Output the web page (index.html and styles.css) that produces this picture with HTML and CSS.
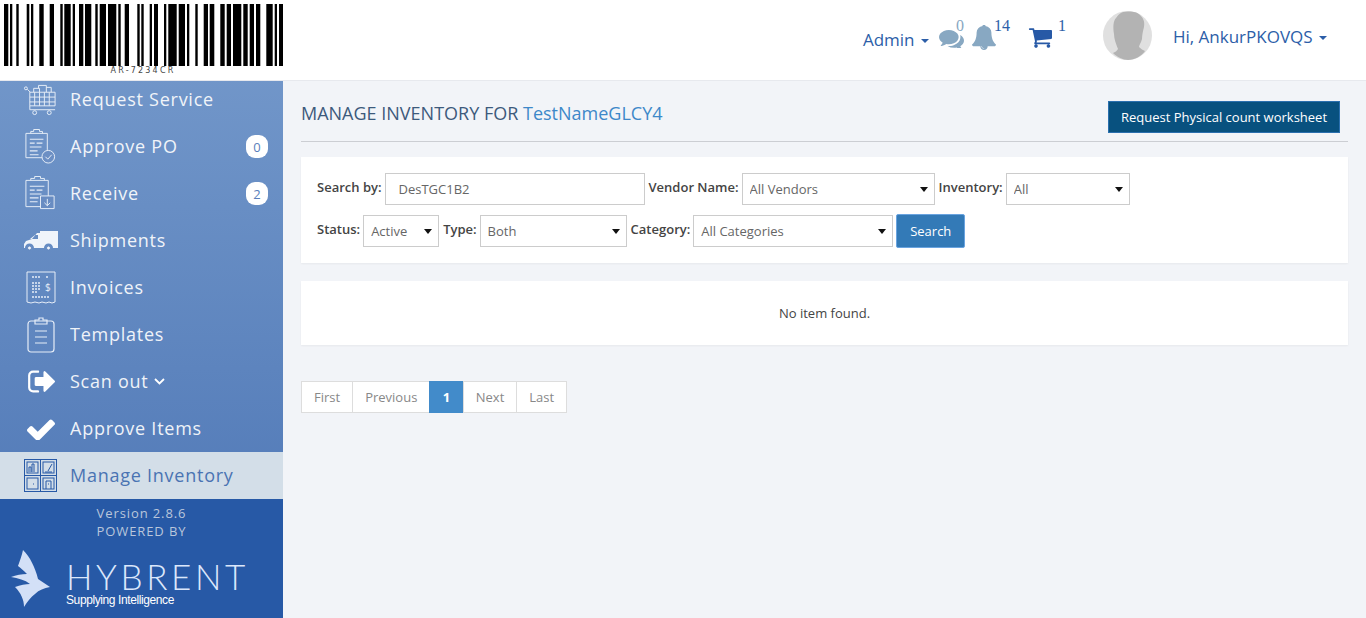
FILE: index.html
```html
<!DOCTYPE html>
<html lang="en">
<head>
    <meta charset="UTF-8">
    <meta name="viewport" content="width=device-width, initial-scale=1.0">
    <title>Manage Inventory</title>
    <link rel="stylesheet" href="styles.css">
</head>
<body>
    <header class="topbar">
        <div class="barcode">
            <svg class="barcode-bars" width="283" height="62" viewBox="0 0 283 62" fill="#000">
                <path d="M4 0h4.300v62H4zM10 0h2.300v62H10zM16.300 0h2.400v62h-2.400zM26.700 0h2.600v62h-2.600zM31 0h2.300v62H31zM39.300 0h4.400v62h-4.400zM49.700 0H54v62h-4.300zM60.300 0h2.400v62h-2.400zM64.300 0h6.400v62h-6.400zM72.700 0H75v62h-2.300zM79 0h4.300v62H79zM85 0h6.300v62H85zM95.300 0h2.400v62h-2.400zM99.700 0H106v62h-6.300zM108 0h8.300v62H108zM118.300 0h2.400v62h-2.400zM124.700 0h4.300v62h-4.300zM137.300 0h2.400v62h-2.400zM141.300 0h2.400v62h-2.400zM149.700 0h2.300v62h-2.300zM154 0h4v62h-4zM164 0h2.300v62H164zM168.300 0h8.400v62h-8.400zM178.700 0h6.300v62h-6.300zM187 0h2.300v62H187zM195.300 0h2.400v62h-2.400zM203.700 0h4.300v62h-4.300zM209.700 0h4.600v62h-4.600zM220.300 0h4.400v62h-4.400zM226.700 0h4.300v62h-4.300zM233 0h8.300v62H233zM243.300 0h4.400v62h-4.400zM249.700 0h4.300v62h-4.300zM256 0h4.300v62H256zM266.300 0h6.400v62h-6.400zM274.700 0h2.300v62h-2.300zM279 0h4.300v62H279z"/>
            </svg>
            <span class="barcode-text">AR-7234CR</span>
        </div>
        <div class="top-links">
            <a class="top-link admin">Admin <i class="caret"></i></a>
            <span class="top-icon chat">
                <svg width="25" height="20" viewBox="0 128 1792 1410" fill="#88a8c2"><path d="M1408 768q0 139-94 257t-256.500 186.500-353.500 68.500q-86 0-176-16-124 88-278 128-36 9-86 16h-3q-11 0-20.500-8t-11.500-21q-1-3-1-6.500t.5-6.500 2-6l2.500-5 3.500-5.500 4-5 4.500-5 4-4.500q5-6 23-25t26-29.500 22.500-29 25-38.500 20.500-44q-124-72-195-177t-71-224q0-139 94-257t256.500-186.500 353.500-68.500 353.500 68.500 256.500 186.500 94 257zm384 256q0 120-71 224.500t-195 176.500q10 24 20.500 44t25 38.500 22.500 29 26 29.500 23 25q1 1 4 4.500t4.500 5 4 5 3.500 5.500l2.500 5 2 6 .5 6.500-1 6.500q-3 14-13 22t-22 7q-50-7-86-16-154-40-278-128-90 16-176 16-271 0-472-132 58 4 88 4 161 0 309-45t264-129q125-92 192-212t67-254q0-77-23-152 129 71 204 178t75 230z"/></svg>
                <sup class="count count-chat">0</sup>
            </span>
            <span class="top-icon bell">
                <svg width="24" height="25" viewBox="64 64 1664 1728" fill="#88a8c2"><path d="M912 1696q0-16-16-16-59 0-101.500-42.500t-42.500-101.500q0-16-16-16t-16 16q0 73 51.500 124.500t124.500 51.500q16 0 16-16zm816-288q0 52-38 90t-90 38h-448q0 106-75 181t-181 75-181-75-75-181h-448q-52 0-90-38t-38-90q50-42 91-88t85-119.500 74.500-158.500 50-206 19.500-260q0-152 117-282.500t307-158.500q-8-19-8-39 0-40 28-68t68-28 68 28 28 68q0 20-8 39 190 28 307 158.500t117 282.500q0 139 19.500 260t50 206 74.500 158.500 85 119.500 91 88z"/></svg>
                <sup class="count count-bell">14</sup>
            </span>
            <span class="top-icon cart">
                <svg width="24" height="20" viewBox="0 256 1728 1408" fill="#2759a6"><path d="M704 1536q0 52-38 90t-90 38-90-38-38-90 38-90 90-38 90 38 38 90zm896 0q0 52-38 90t-90 38-90-38-38-90 38-90 90-38 90 38 38 90zm128-1088v512q0 24-16.500 42.500t-40.500 21.500l-1044 122q13 60 13 70 0 16-24 64h920q26 0 45 19t19 45-19 45-45 19h-1024q-26 0-45-19t-19-45q0-11 8-31.500t16-36 21.500-40 15.500-29.500l-177-823h-204q-26 0-45-19t-19-45 19-45 45-19h256q16 0 28.500 6.500t19.500 15.500 13 24.500 8 26 5.500 29.500 4.500 26h1201q26 0 45 19t19 45z"/></svg>
                <sup class="count count-cart">1</sup>
            </span>
            <span class="avatar">
                <svg width="49" height="49" viewBox="0 0 49 49">
                    <circle cx="24.500" cy="24.500" r="24.500" fill="#e0e0e0"/>
                    <path d="M20 1c5-1 14-1 17 3 3 3 5 6 4 12-1 4-2 8-2 12-1 4-3 6-3 8 2 2 4 3 6 4-3 5-11 9-17 9-5 0-11-3-15-7 2-1 4-2 5-4-2-5-4-10-4-15-1-6-1-13 2-16 2-3 4-5 7-6z" fill="#b3b3b3"/>
                </svg>
            </span>
            <a class="top-link user">Hi, AnkurPKOVQS <i class="caret"></i></a>
        </div>
    </header>

    <div class="page">
        <aside class="sidebar">
            <nav class="menu">
                <a class="menu-item">
                    <span class="menu-icon">
                        <svg width="36" height="36" viewBox="0 0 36 36" fill="none" stroke="#e6edf7" stroke-width="1">
                            <circle cx="3" cy="6" r="1.500"/><path d="M4.500 7l3 3"/>
                            <path d="M7 10h26v14H7zM7 15h26M7 20h26M12 10v14M17 10v14M22 10v14M27 10v14M7 24v4h26"/>
                            <path d="M11 10V6h6v4M16 6V3h8v7M24 5h5v5"/>
                            <circle cx="12" cy="31" r="2"/><circle cx="27" cy="31" r="2"/>
                        </svg>
                    </span>
                    <span class="menu-label">Request Service</span>
                </a>
                <a class="menu-item">
                    <span class="menu-icon">
                        <svg width="36" height="36" viewBox="0 0 36 36" fill="none" stroke="#e6edf7" stroke-width="1">
                            <path d="M24 29H3V4h22v17M8 4V2h3V0h6v2h3v2"/>
                            <path d="M7 10h14M7 14h5M14 14h6M7 18h12M7 22h8M7 26h9" stroke-width="1.200"/>
                            <circle cx="26" cy="28" r="6.500" fill="#6c8fc4"/><path d="M23 28l2.500 2.500 4-4.500"/>
                        </svg>
                    </span>
                    <span class="menu-label">Approve PO</span>
                    <span class="badge">0</span>
                </a>
                <a class="menu-item">
                    <span class="menu-icon">
                        <svg width="36" height="36" viewBox="0 0 36 36" fill="none" stroke="#e6edf7" stroke-width="1">
                            <path d="M23 31H3V4h23v16M8 4V2h4V0h6v2h4v2"/>
                            <path d="M7 10h15M7 14h5M14 14h6M7 18h12M7 22h9M7 26h8" stroke-width="1.200"/>
                            <path d="M18 20h14v13H18zM25 23v7M22 27l3 3 3-3" fill="#688cc2"/>
                        </svg>
                    </span>
                    <span class="menu-label">Receive</span>
                    <span class="badge">2</span>
                </a>
                <a class="menu-item">
                    <span class="menu-icon">
                        <svg width="34" height="20" viewBox="0 0 34 20" fill="#f0f4fa">
                            <path d="M16 0h18v17h-5a4.500 4.500 0 0 0-9 0H10a4.500 4.500 0 0 0-9 0H0v-4l2-3 6-2 5-6h3zM6 8h8V4h-3z" fill-rule="evenodd"/>
                            <circle cx="5.500" cy="17" r="2" stroke="#6488c0"/><circle cx="24.500" cy="17" r="2" stroke="#6488c0"/>
                        </svg>
                    </span>
                    <span class="menu-label">Shipments</span>
                </a>
                <a class="menu-item">
                    <span class="menu-icon">
                        <svg width="30" height="34" viewBox="0 0 30 34" fill="none" stroke="#e6edf7" stroke-width="1">
                            <path d="M1 1h28v30l-3 1-3-1-3 1-4-1-3 1-4-1-4 1-4-1z"/>
                            <path d="M6 6h9M20 6h3M6 12h8M6 15h8M6 18h8M6 21h6M6 26h18" stroke-dasharray="2 1" stroke-width="1.400"/>
                            <text x="19" y="20" class="invoice-sign">$</text>
                        </svg>
                    </span>
                    <span class="menu-label">Invoices</span>
                </a>
                <a class="menu-item">
                    <span class="menu-icon">
                        <svg width="28" height="36" viewBox="0 0 28 36" fill="none" stroke="#e6edf7" stroke-width="1.200">
                            <rect x="1" y="4" width="26" height="31" rx="3"/>
                            <path d="M8 7V3h4V1h4v2h4v4z"/>
                            <path d="M8 14h12M8 20h12M8 26h12"/>
                        </svg>
                    </span>
                    <span class="menu-label">Templates</span>
                </a>
                <a class="menu-item">
                    <span class="menu-icon">
                        <svg width="28" height="23" viewBox="0 256 1632 1280" fill="#fff"><path d="M704 1440q0 4 1 20t.5 26.500-3 23.500-10 19.500-20.500 6.500h-320q-119 0-203.500-84.500t-84.500-203.500v-704q0-119 84.500-203.500t203.500-84.500h320q13 0 22.500 9.500t9.500 22.500q0 4 1 20t.5 26.500-3 23.500-10 19.500-20.500 6.500h-320q-66 0-113 47t-47 113v704q0 66 47 113t113 47h288l11.500 1 11.500 3 8 5.500 7 9 2 13.500zm928-544q0 26-19 45l-544 544q-19 19-45 19t-45-19-19-45v-288h-448q-26 0-45-19t-19-45v-384q0-26 19-45t45-19h448v-288q0-26 19-45t45-19 45 19l544 544q19 19 19 45z"/></svg>
                    </span>
                    <span class="menu-label">Scan out</span>
                    <svg class="chevron" width="11" height="7" viewBox="0 0 11 7" fill="none" stroke="#fff" stroke-width="1.800"><path d="M1 1l4.500 4.500L10 1"/></svg>
                </a>
                <a class="menu-item">
                    <span class="menu-icon">
                        <svg width="28" height="22" viewBox="120 340 1551 1046" fill="#fff"><path d="M1671 566q0 40-28 68l-724 724-136 136q-28 28-68 28t-68-28l-136-136-362-362q-28-28-28-68t28-68l136-136q28-28 68-28t68 28l294 295 656-657q28-28 68-28t68 28l136 136q28 28 28 68z"/></svg>
                    </span>
                    <span class="menu-label">Approve Items</span>
                </a>
                <a class="menu-item active">
                    <span class="menu-icon">
                        <svg width="33" height="33" viewBox="0 0 33 33" fill="none" stroke="#2759a6" stroke-width="1">
                            <rect x=".5" y=".5" width="32" height="32"/>
                            <path d="M16.500 1v32M1 16.500h32"/>
                            <rect x="3" y="3" width="11" height="11"/><rect x="19" y="3" width="11" height="11"/>
                            <rect x="3" y="19" width="11" height="11"/><rect x="19" y="19" width="11" height="11"/>
                            <path d="M5 13V8h2v5M8 13V5h2v8M21 13h7M24 12l4-7M22 30v-8h5v8M24 25h1M9 25h1"/>
                        </svg>
                    </span>
                    <span class="menu-label">Manage Inventory</span>
                </a>
            </nav>
            <footer class="side-footer">
                <div class="version">Version 2.8.6</div>
                <div class="powered">POWERED BY</div>
                <div class="logo">
                    <svg class="logo-mark" width="40" height="58" viewBox="0 0 40 58" fill="#d3e0f7">
                        <path d="M12 0c7 7 12 17 15 29l12 8c-6 1-11 3-15 7-4 3-8 8-11 13 0-7-3-14-9-20 5-2 11-3 15-3-5-4-12-6-19-7 5-2 11-3 16-3-3-3-6-6-9-8 2-6 4-11 5-16z"/>
                    </svg>
                    <div class="logo-text">
                        <div class="logo-name">HYBRENT</div>
                        <div class="logo-tag">Supplying Intelligence</div>
                    </div>
                </div>
            </footer>
        </aside>

        <main class="content">
            <div class="title-row">
                <h1 class="page-title">MANAGE INVENTORY FOR <span class="store-name">TestNameGLCY4</span></h1>
                <button class="btn-worksheet">Request Physical count worksheet</button>
            </div>

            <section class="card filters">
                <div class="filter-row">
                    <label>Search by:</label>
                    <input class="field search-field" type="text" value="DesTGC1B2">
                    <label>Vendor Name:</label>
                    <span class="select w-vendor"><select class="field"><option>All Vendors</option></select></span>
                    <label>Inventory:</label>
                    <span class="select w-inventory"><select class="field"><option>All</option></select></span>
                </div>
                <div class="filter-row">
                    <label>Status:</label>
                    <span class="select w-status"><select class="field"><option>Active</option></select></span>
                    <label>Type:</label>
                    <span class="select w-type"><select class="field"><option>Both</option></select></span>
                    <label>Category:</label>
                    <span class="select w-category"><select class="field"><option>All Categories</option></select></span>
                    <button class="btn-search">Search</button>
                </div>
            </section>

            <section class="card empty">No item found.</section>

            <ul class="pagination">
                <li>First</li>
                <li>Previous</li>
                <li class="current">1</li>
                <li>Next</li>
                <li>Last</li>
            </ul>
        </main>
    </div>
</body>
</html>
```

FILE: styles.css
```css
* {
    box-sizing: border-box;
}
html, body {
    height: 100%;
}
body {
    margin: 0;
    overflow: hidden;
    font-family: 'Open Sans', sans-serif;
    font-size: 13px;
    color: #333;
    background-color: #f2f4f8;
    display: flex;
    flex-direction: column;
}
svg {
    display: block;
}

/* top bar */
.topbar {
    height: 81px;
    flex: none;
    background-color: #fff;
    border-bottom: 1px solid #e7e9ee;
    display: flex;
    justify-content: space-between;
}
.barcode {
    width: 283px;
    padding-top: 4px;
    display: flex;
    flex-direction: column;
    align-items: center;
}
.barcode-text {
    margin: 0 0 0 3px;
    font-family: 'DejaVu Sans', sans-serif;
    font-size: 8px;
    line-height: 9px;
    letter-spacing: 2.200px;
    color: #444;
}
.top-links {
    display: flex;
    align-items: flex-start;
    color: #2c5ea8;
}
.top-link {
    font-size: 17px;
    color: #2c5ea8;
    white-space: nowrap;
}
.admin {
    margin-top: 28px;
}
.user {
    margin: 25px 39px 0 21px;
}
.caret {
    display: inline-block;
    margin-left: 2px;
    vertical-align: middle;
    border-top: 4px solid #2c5ea8;
    border-left: 4px solid transparent;
    border-right: 4px solid transparent;
}
.top-icon {
    display: flex;
    align-items: flex-start;
}
.chat {
    margin: 28px 0 0 10px;
}
.bell {
    margin: 25px 0 0 8px;
}
.cart {
    margin: 28px 0 0 18px;
}
.avatar {
    margin: 11px 0 0 37px;
}
.count {
    font-family: 'Liberation Serif', serif;
    font-size: 16px;
    line-height: 18px;
    color: #2c5ea8;
}
.count-chat {
    color: #88a8c2;
    margin: -11px 0 0 -8px;
}
.count-bell {
    margin: -8px 0 0 -2px;
}
.count-cart {
    margin: -11px 0 0 6px;
}

/* sidebar */
.page {
    flex: 1;
    display: flex;
    min-height: 0;
}
.sidebar {
    width: 283px;
    flex: none;
    overflow: hidden;
    display: flex;
    flex-direction: column;
}
.menu {
    margin-top: -5px;
    background-image: linear-gradient(#7196c9, #547cb9);
}
.menu-item {
    height: 47px;
    display: flex;
    align-items: center;
    color: #fff;
}
.menu-icon {
    width: 70px;
    flex: none;
    padding-left: 23px;
    padding-right: 12px;
    display: flex;
    justify-content: center;
}
.menu-label {
    font-size: 18px;
    letter-spacing: .75px;
    padding-bottom: 2px;
    opacity: .9;
}
.chevron {
    margin: 0 0 0 5px;
}
.invoice-sign {
    font-family: 'Open Sans', sans-serif;
    font-size: 10px;
    fill: #e6edf7;
    stroke: none;
}
.badge {
    margin-left: auto;
    margin-right: 15px;
    width: 22px;
    height: 23px;
    border-radius: 9px;
    background-color: #fff;
    color: #5a7fbb;
    font-size: 13px;
    display: flex;
    align-items: center;
    justify-content: center;
}
.active {
    background-color: #d3dee8;
    color: #2759a6;
}
.active .menu-label {
    opacity: .8;
}
.side-footer {
    flex: 1;
    background-color: #2759a6;
    text-align: center;
    color: #b9c6db;
    font-size: 13px;
    letter-spacing: .9px;
    line-height: 18px;
    padding-top: 5px;
}
.logo {
    display: flex;
    align-items: flex-start;
    margin: 10px 0 0 11px;
    text-align: left;
}
.logo-mark {
    flex: none;
}
.logo-text {
    margin: 11px 0 0 15px;
}
.logo-name {
    font-family: 'Lato', sans-serif;
    font-weight: 300;
    font-size: 35px;
    line-height: 30px;
    letter-spacing: 3.600px;
    color: #dbe7fb;
}
.logo-tag {
    font-family: 'Liberation Sans', sans-serif;
    font-size: 12px;
    line-height: 12px;
    letter-spacing: -.4px;
    color: #fff;
    margin-top: 3px;
}

/* main */
.content {
    flex: 1;
    padding: 20px 18px 0;
}
.title-row {
    height: 41px;
    border-bottom: 1px solid #ccced3;
    display: flex;
    justify-content: space-between;
    align-items: flex-start;
    margin-bottom: 15px;
}
.page-title {
    margin: 0;
    font-size: 18px;
    font-weight: 400;
    line-height: 24px;
    color: #3d5a7c;
}
.store-name {
    color: #3d88c9;
}
.btn-worksheet {
    width: 232px;
    height: 32px;
    margin-right: 8px;
    padding: 0;
    font-family: inherit;
    font-size: 13px;
    font-weight: 500;
    color: #fff;
    background-color: #08517f;
    border: 1px solid #2a6fae;
}
.card {
    background-color: #fff;
    box-shadow: 0 1px 2px rgba(0, 0, 0, .05);
}
.filters {
    height: 106px;
    padding: 16px;
    display: flex;
    flex-direction: column;
    gap: 10px;
    margin-bottom: 18px;
}
.filter-row {
    display: flex;
    align-items: center;
    gap: 3px;
    height: 32px;
}
.filter-row label {
    font-weight: 600;
    color: #444;
    margin-top: -4px;
}
.filter-row label:not(:first-child) {
    margin-left: 1px;
}
.field {
    display: block;
    width: 100%;
    height: 32px;
    border: 1px solid #ccc;
    border-radius: 0;
    background-color: #fff;
    font-family: inherit;
    font-size: 13px;
    color: #666;
    padding: 0 7px;
    appearance: none;
    outline: none;
}
.search-field {
    width: 260px;
    padding-left: 13px;
}
.select {
    position: relative;
    display: block;
}
.select::after {
    content: "";
    position: absolute;
    right: 7px;
    top: 14px;
    border-top: 5px solid #111;
    border-left: 4px solid transparent;
    border-right: 4px solid transparent;
}
.w-vendor { width: 193px; }
.w-inventory { width: 124px; }
.w-status { width: 76px; }
.w-type { width: 147px; }
.w-category { width: 200px; }
.btn-search {
    width: 69px;
    height: 34px;
    padding: 0;
    font-family: inherit;
    font-size: 13px;
    font-weight: 500;
    color: #fff;
    background-color: #337ab7;
    border: 1px solid #6aa4e0;
    border-radius: 2px;
}
.empty {
    height: 64px;
    display: flex;
    align-items: center;
    justify-content: center;
    color: #444;
    font-size: 13px;
    margin-bottom: 36px;
}
.pagination {
    margin: 0;
    padding: 0;
    list-style: none;
    display: flex;
}
.pagination li {
    height: 32px;
    padding: 0 12px;
    margin-right: -1px;
    display: flex;
    align-items: center;
    font-size: 13px;
    color: #888;
    background-color: #fff;
    border: 1px solid #ddd;
}
.pagination .current {
    padding: 0 12.500px;
    background-color: #428bca;
    border-color: #428bca;
    color: #fff;
    font-weight: 700;
}
```
